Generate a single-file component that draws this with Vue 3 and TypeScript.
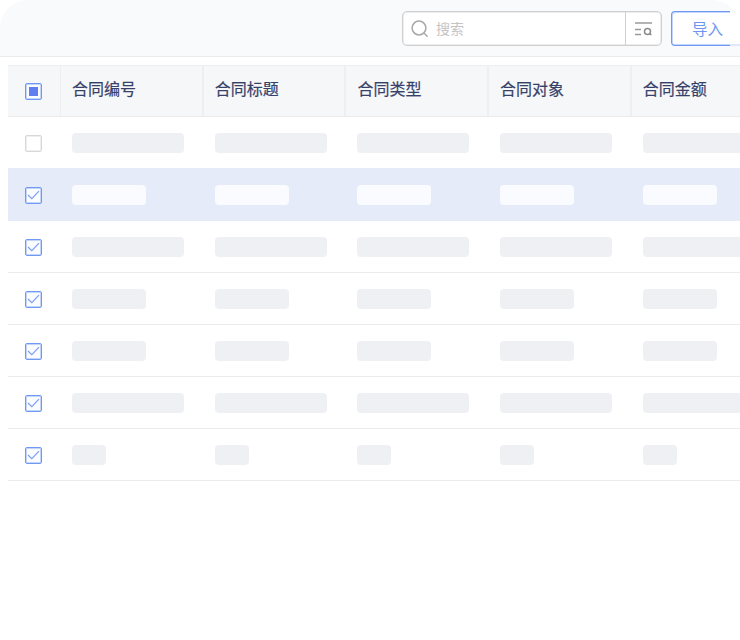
<script setup lang="ts">
const columns = ['合同编号', '合同标题', '合同类型', '合同对象', '合同金额']
const rows = [
  { checked: false, width: 112, active: false },
  { checked: true, width: 74, active: true },
  { checked: true, width: 112, active: false },
  { checked: true, width: 74, active: false },
  { checked: true, width: 74, active: false },
  { checked: true, width: 112, active: false },
  { checked: true, width: 34, active: false },
]
</script>

<template>
  <div class="page">
    <header class="toolbar">
      <div class="search">
        <div class="search-main">
          <svg class="search-icon" width="18" height="18" viewBox="0 0 18 18" fill="none">
            <circle cx="8" cy="8" r="6.9" stroke="#a8a8a8" stroke-width="1.5" />
            <path d="M13.2 13.2 16.6 16.8" stroke="#a8a8a8" stroke-width="1.3" />
          </svg>
          <span class="placeholder">搜索</span>
        </div>
        <div class="search-filter">
          <svg width="18" height="14" viewBox="0 0 18 14" fill="none">
            <path d="M0 1h17M0 7.5h6M0 12.5h6" stroke="#9a9a9a" stroke-width="1.4" />
            <circle cx="12.5" cy="9.5" r="3" stroke="#8a8a8a" stroke-width="1.5" />
            <path d="M14.6 11.6 16.4 13" stroke="#8a8a8a" stroke-width="1.4" />
          </svg>
        </div>
      </div>
      <button class="import">导入</button>
    </header>

    <div class="table">
      <div class="row head">
        <div class="cell check-cell">
          <span class="box box-on"><i class="mark"></i></span>
        </div>
        <div v-for="c in columns" :key="c" class="cell title">{{ c }}</div>
      </div>
      <div v-for="(r, i) in rows" :key="i" class="row body" :class="{ active: r.active }">
        <div class="cell check-cell">
          <span class="box" :class="{ 'box-on': r.checked }">
            <svg v-if="r.checked" width="13" height="10" viewBox="0 0 13 10" fill="none">
              <path d="M1 5 4.8 8.6 12 1.2" stroke="#7d9df5" stroke-width="1.2" />
            </svg>
          </span>
        </div>
        <div v-for="c in columns" :key="c" class="cell">
          <span class="skeleton" :style="{ width: r.width + 'px' }"></span>
        </div>
      </div>
    </div>
  </div>
</template>

<style>
html, body { margin: 0; background: #fff; }
</style>

<style scoped>
.page {
  width: 740px;
  height: 640px;
  overflow: hidden;
  background: #fff;
  font-family: "Noto Sans CJK SC", "Noto Sans", sans-serif;
}
.toolbar {
  height: 57px;
  box-sizing: border-box;
  display: flex;
  justify-content: flex-end;
  align-items: flex-start;
  padding-top: 11px;
  gap: 9px;
  background: #f9fafc;
  border-bottom: 1px solid #ebebeb;
  border-radius: 28px 28px 0 0;
  overflow: hidden;
}
.search {
  width: 260px;
  height: 35px;
  box-sizing: border-box;
  display: flex;
  background: #fff;
  border: 1px solid #cfcfcf;
  box-shadow: inset 0 0 0 1px #ededed;
  border-radius: 5px;
}
.search-main {
  flex: 1;
  display: flex;
  align-items: center;
  padding-left: 8px;
  gap: 7px;
}
.search-icon { flex: none; }
.placeholder {
  font-size: 14px;
  color: #c4c4c4;
  line-height: 20px;
  margin-top: -1px;
}
.search-filter {
  width: 35px;
  display: flex;
  align-items: center;
  justify-content: center;
  border-left: 1px solid #cfcfcf;
}
.import {
  position: relative;
  flex: none;
  width: 69px;
  height: 35px;
  padding: 0 0 2px 3px;
  background: #fff;
  color: #6b97f2;
  font: inherit;
  font-size: 15.5px;
  border: 1px solid #6f99f5;
  box-shadow: inset 1px 1px 0 #c3d5fb, inset 0 -1px 0 #c3d5fb;
  border-right: 0;
  border-radius: 4px 0 0 4px;
}
.import::before,
.import::after {
  content: "";
  position: absolute;
  right: 0;
  width: 10px;
  height: 2px;
}
.import::before {
  top: -1px;
  background: #fff;
}
.import::after {
  bottom: -1px;
  background: #dfe8fc;
}
.table {
  margin: 8px 0 0 8px;
  width: 732px;
  overflow: hidden;
}
.row {
  display: grid;
  grid-template-columns: 53px repeat(5, 142.7px);
  box-sizing: border-box;
}
.head {
  height: 52px;
  background: #f6f7f9;
  border-top: 1px solid #eeeeee;
  border-bottom: 1px solid #ebebeb;
}
.body {
  height: 52px;
  border-bottom: 1px solid #ebebeb;
}
.body.active {
  background: #e6ebf9;
  border-bottom-color: #e6ebf9;
  box-shadow: 0 -1px 0 #e6ebf9;
}
.cell {
  display: flex;
  align-items: center;
  padding-left: 11px;
  box-sizing: border-box;
  min-width: 0;
}
.check-cell {
  padding-left: 16.5px;
}
.head .cell {
  border-right: 2px solid #eeeff1;
}
.head .check-cell {
  border-right-width: 1px;
}
.title {
  font-size: 16px;
  font-weight: 400;
  line-height: 20px;
  padding-bottom: 7px;
  color: #36416a;
  white-space: nowrap;
  -webkit-text-stroke: 0.2px #36416a;
}
.box {
  width: 17px;
  height: 17px;
  margin-top: 1px;
  box-sizing: border-box;
  display: flex;
  align-items: center;
  justify-content: center;
  background: #fff;
  border: 1px solid #d8d8d8;
  box-shadow: inset 0 0 0 1px #efefef;
  border-radius: 2px;
}
.box-on {
  border-color: #6f99f5;
  box-shadow: inset 0 0 0 1px #c3d5fb;
  background: #fbfcff;
}
.mark {
  width: 9px;
  height: 9px;
  background: #5f7ff0;
}
.skeleton {
  display: block;
  height: 20px;
  background: #eff0f4;
  border-radius: 4px;
}
.active .skeleton {
  background: #f9fbff;
}
</style>
